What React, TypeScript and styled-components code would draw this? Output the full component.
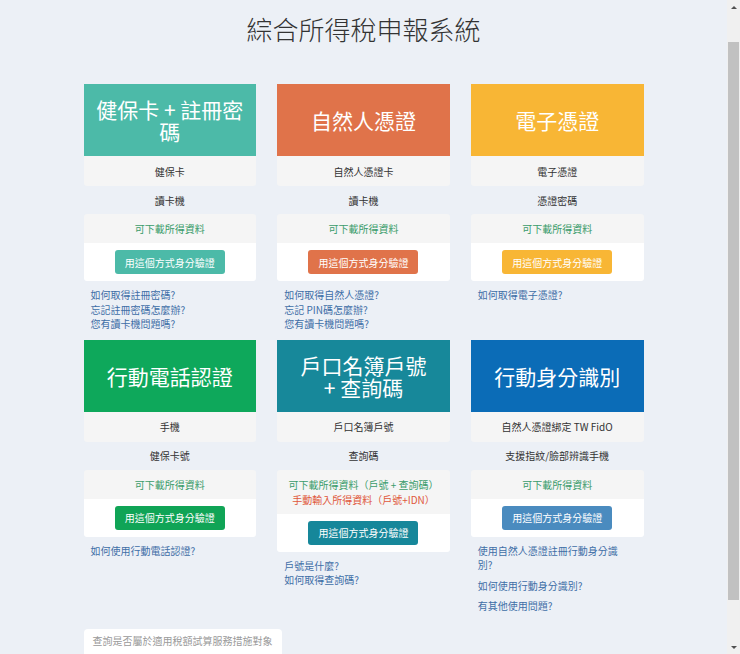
import styled, { createGlobalStyle } from "styled-components";

const GlobalStyle = createGlobalStyle`
  html, body {
    margin: 0;
    padding: 0;
    background: #ecf0f6;
  }
  body {
    font-family: "Noto Sans CJK TC", "Noto Sans", "Liberation Sans", sans-serif;
    color: #333333;
  }
`;

const Shell = styled.div`
  padding-right: 13px;
`;

const Page = styled.div`
  width: 560px;
  margin: 0 auto;
  padding: 12px 0 60px;
`;

const Title = styled.h1`
  margin: 0 0 38px;
  font-size: 26px;
  font-weight: 300;
  line-height: 34px;
  text-align: center;
  color: #333333;
`;

const Grid = styled.div`
  display: grid;
  grid-template-columns: repeat(3, 1fr);
  column-gap: 21px;
  row-gap: 8px;
`;

const Card = styled.div`
  display: flex;
  flex-direction: column;
`;

const Header = styled.div<{ $bg: string }>`
  height: 72px;
  display: flex;
  align-items: center;
  justify-content: center;
  padding: 0 10px;
  background: ${(p) => p.$bg};
  color: #ffffff;
  font-size: 21px;
  line-height: 22px;
  text-align: center;
  white-space: pre-line;
`;

const InfoRow = styled.div<{ $shaded?: boolean }>`
  height: ${(p) => (p.$shaded ? "30px" : "28px")};
  display: flex;
  align-items: center;
  justify-content: center;
  background: ${(p) => (p.$shaded ? "#f5f5f5" : "transparent")};
  border-radius: 0 0 3px 3px;
  font-size: 10px;
  color: #333333;
`;

const ActionBox = styled.div`
  border-radius: 3px;
  overflow: hidden;
`;

const Feature = styled.div`
  padding: 7px 4px;
  background: #f5f5f5;
  text-align: center;
  font-size: 10px;
  line-height: 15px;
`;

const FeatureLine = styled.div<{ $warn?: boolean }>`
  color: ${(p) => (p.$warn ? "#e0583c" : "#3a9c6b")};
`;

const ButtonRow = styled.div`
  padding: 7px 0;
  background: #ffffff;
  display: flex;
  justify-content: center;
`;

const UseButton = styled.button<{ $bg: string }>`
  height: 24px;
  padding: 0 10px;
  border: none;
  border-radius: 3px;
  background: ${(p) => p.$bg};
  color: #ffffff;
  font-family: inherit;
  font-size: 10px;
  cursor: pointer;
`;

const Links = styled.div<{ $spaced?: boolean }>`
  padding: 7px 16px 0 7px;
  font-size: 10px;
  line-height: 14.5px;
  display: flex;
  flex-direction: column;
  gap: ${(p) => (p.$spaced ? "6px" : "0")};
`;

const HelpLink = styled.a`
  color: #3e6ea6;
  text-decoration: none;
`;

const QueryBox = styled.div`
  margin-top: 15px;
  display: inline-block;
  padding: 4px 9px 30px;
  background: #ffffff;
  border-radius: 4px;
  font-size: 10px;
  line-height: 15px;
  color: #9a9a9a;
`;

/* window scrollbar drawn over the right edge */
const ScrollBar = styled.div`
  position: fixed;
  top: 0;
  right: 0;
  bottom: 0;
  width: 13px;
  background: #f0f0f0;
  display: flex;
  flex-direction: column;
  align-items: center;
`;

const Arrow = styled.div<{ $down?: boolean }>`
  height: 14px;
  display: flex;
  align-items: center;
  justify-content: center;
  &::after {
    content: "";
    border-left: 3px solid transparent;
    border-right: 3px solid transparent;
    ${(p) =>
      p.$down ? "border-top: 3px solid #505050;" : "border-bottom: 3px solid #505050;"}
  }
`;

const Track = styled.div`
  flex: 1;
  width: 100%;
  padding: 28px 1px 40px;
  box-sizing: border-box;
  display: flex;
`;

const Thumb = styled.div`
  flex: 1;
  background: #c1c1c1;
`;

interface Method {
  title: string;
  color: string;
  button: string;
  rows: [string, string];
  features: { text: string; warn?: boolean }[];
  links: string[];
  spaced?: boolean;
}

const methods: Method[] = [
  {
    title: "健保卡 + 註冊密碼",
    color: "#4cbaa8",
    button: "#4cbaa8",
    rows: ["健保卡", "讀卡機"],
    features: [{ text: "可下載所得資料" }],
    links: ["如何取得註冊密碼?", "忘記註冊密碼怎麼辦?", "您有讀卡機問題嗎?"],
  },
  {
    title: "自然人憑證",
    color: "#e0734a",
    button: "#e0734a",
    rows: ["自然人憑證卡", "讀卡機"],
    features: [{ text: "可下載所得資料" }],
    links: ["如何取得自然人憑證?", "忘記 PIN碼怎麼辦?", "您有讀卡機問題嗎?"],
  },
  {
    title: "電子憑證",
    color: "#f8b635",
    button: "#f8b635",
    rows: ["電子憑證", "憑證密碼"],
    features: [{ text: "可下載所得資料" }],
    links: ["如何取得電子憑證?"],
  },
  {
    title: "行動電話認證",
    color: "#0ea85b",
    button: "#10a456",
    rows: ["手機", "健保卡號"],
    features: [{ text: "可下載所得資料" }],
    links: ["如何使用行動電話認證?"],
  },
  {
    title: "戶口名簿戶號\n+ 查詢碼",
    color: "#17889a",
    button: "#16879a",
    rows: ["戶口名簿戶號", "查詢碼"],
    features: [
      { text: "可下載所得資料（戶號 + 查詢碼）" },
      { text: "手動輸入所得資料（戶號+IDN）", warn: true },
    ],
    links: ["戶號是什麼?", "如何取得查詢碼?"],
  },
  {
    title: "行動身分識別",
    color: "#0b6cb7",
    button: "#4a8bbf",
    rows: ["自然人憑證綁定 TW FidO", "支援指紋/臉部辨識手機"],
    features: [{ text: "可下載所得資料" }],
    links: ["使用自然人憑證註冊行動身分識別?", "如何使用行動身分識別?", "有其他使用問題?"],
    spaced: true,
  },
];

const App = () => {
  return (
    <>
      <GlobalStyle />
      <Shell>
        <Page>
          <Title>綜合所得稅申報系統</Title>
          <Grid>
            {methods.map((m) => (
              <Card key={m.title}>
                <Header $bg={m.color}>{m.title}</Header>
                <InfoRow $shaded>{m.rows[0]}</InfoRow>
                <InfoRow>{m.rows[1]}</InfoRow>
                <ActionBox>
                  <Feature>
                    {m.features.map((f) => (
                      <FeatureLine key={f.text} $warn={f.warn}>
                        {f.text}
                      </FeatureLine>
                    ))}
                  </Feature>
                  <ButtonRow>
                    <UseButton $bg={m.button}>用這個方式身分驗證</UseButton>
                  </ButtonRow>
                </ActionBox>
                <Links $spaced={m.spaced}>
                  {m.links.map((l) => (
                    <HelpLink key={l} href="#">
                      {l}
                    </HelpLink>
                  ))}
                </Links>
              </Card>
            ))}
          </Grid>
          <QueryBox>查詢是否屬於適用稅額試算服務措施對象</QueryBox>
        </Page>
      </Shell>
      <ScrollBar>
        <Arrow />
        <Track>
          <Thumb />
        </Track>
        <Arrow $down />
      </ScrollBar>
    </>
  );
};

export default App;
